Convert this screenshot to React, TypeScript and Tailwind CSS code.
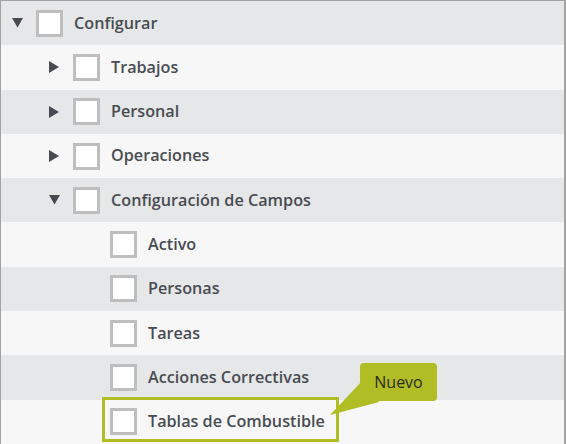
import React from "react";

type Node = {
  label: string;
  level: number;
  toggle?: "open" | "closed";
};

const nodes: Node[] = [
  { label: "Configurar", level: 0, toggle: "open" },
  { label: "Trabajos", level: 1, toggle: "closed" },
  { label: "Personal", level: 1, toggle: "closed" },
  { label: "Operaciones", level: 1, toggle: "closed" },
  { label: "Configuración de Campos", level: 1, toggle: "open" },
  { label: "Activo", level: 2 },
  { label: "Personas", level: 2 },
  { label: "Tareas", level: 2 },
  { label: "Acciones Correctivas", level: 2 },
  { label: "Tablas de Combustible", level: 2 },
];

const indent = ["pl-[11px]", "pl-[48px]", "pl-[85px]"];

const Caret = ({ open }: { open: boolean }) =>
  open ? (
    <svg width="11" height="10" viewBox="0 0 11 10" className="fill-[#464b51]">
      <polygon points="0,0 11,0 5.5,9.5" />
    </svg>
  ) : (
    <svg width="10" height="12" viewBox="0 0 10 12" className="fill-[#464b51]">
      <polygon points="0,0 10,6 0,12" />
    </svg>
  );

export default function App() {
  return (
    <div
      className="w-[566px] h-[444px] overflow-hidden border-t border-l border-r-2 border-[#a3a3a3] bg-[#f7f7f7]"
      style={{ fontFamily: '"Open Sans", "Liberation Sans", sans-serif' }}
    >
      {nodes.map((n, i) => {
        const last = i === nodes.length - 1;
        return (
          <div
            key={n.label}
            className={`relative flex items-center h-[44.3px] ${indent[n.level]} ${
              i % 2 === 0 ? "bg-[#e6e7e8]" : "bg-[#f7f7f7]"
            }`}
          >
            <div className="w-[24px] flex items-center">
              {n.toggle && <Caret open={n.toggle === "open"} />}
            </div>
            <div className="w-[27px] h-[27px] border-[3px] border-[#bebebe] bg-white" />
            <span className="ml-[11px] mb-[1px] text-[16.2px] font-semibold text-[#484c52]">{n.label}</span>

            {last && (
              <>
                <div className="absolute left-[101px] top-[-3px] w-[237px] h-[45px] border-[3px] border-[#b0bd24]" />
                <svg
                  className="absolute left-[326px] top-[-22px]"
                  width="56"
                  height="40"
                  viewBox="0 0 56 40"
                >
                  <polygon points="36,2 52,24 3,37" fill="#b0bd24" />
                </svg>
                <div className="absolute left-[359px] top-[-37px] w-[77px] h-[38px] rounded-[4px] bg-[#b0bd24] flex items-center justify-center text-[16px] text-[#2b2b18]">
                  Nuevo
                </div>
              </>
            )}
          </div>
        );
      })}
    </div>
  );
}
